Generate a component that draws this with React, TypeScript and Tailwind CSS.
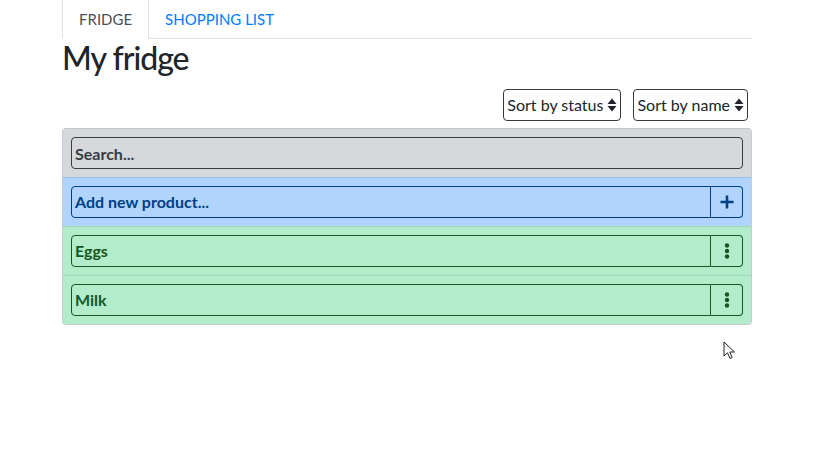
import { useState } from "react";

const font = { fontFamily: "Lato, 'Noto Sans', sans-serif" };

function SortCaret() {
  return (
    <svg width="10" height="14" viewBox="0 0 10 14" className="ml-[4px]">
      <path d="M5 0.5 L9.5 6 H0.5 Z" fill="#212529" />
      <path d="M5 13.5 L9.5 8 H0.5 Z" fill="#212529" />
    </svg>
  );
}

function SortSelect({ label }: { label: string }) {
  return (
    <button className="flex h-8 items-center rounded border border-[#343a40] bg-white px-[3px] text-base text-[#212529]">
      <span>{label}</span>
      <SortCaret />
    </button>
  );
}

function Dots() {
  return (
    <svg width="6" height="16" viewBox="0 0 6 16">
      <circle cx="3" cy="2.5" r="2.2" fill="#155724" />
      <circle cx="3" cy="8" r="2.2" fill="#155724" />
      <circle cx="3" cy="13.5" r="2.2" fill="#155724" />
    </svg>
  );
}

function Plus() {
  return (
    <svg width="14" height="14" viewBox="0 0 14 14">
      <path d="M7 0.5 V13.5 M0.5 7 H13.5" stroke="#004085" strokeWidth="2.6" />
    </svg>
  );
}

function ProductRow({ name }: { name: string }) {
  return (
    <div className="border-t border-[#9fd7b3] bg-[#b3ecca] p-2">
      <div className="flex h-8">
        <input
          readOnly
          value={name}
          className="min-w-0 flex-1 rounded-l border border-[#155724] bg-transparent px-[3px] font-bold text-[#155724] outline-none"
        />
        <button className="flex w-8 items-center justify-center rounded-r border border-l-0 border-[#155724]">
          <Dots />
        </button>
      </div>
    </div>
  );
}

export default function App() {
  const [tab, setTab] = useState("fridge");
  const products = ["Eggs", "Milk"];

  return (
    <div className="relative h-[450px] w-full bg-white text-[#212529]" style={font}>
      <div className="ml-[62px] w-[690px]">
        {/* Tabs */}
        <div className="flex border-b border-[#dee2e6]">
          <button
            onClick={() => setTab("fridge")}
            className="-mb-px h-[39px] border-x border-b border-[#dee2e6] border-b-white bg-white px-4 text-[15px] text-[#495057]"
          >
            FRIDGE
          </button>
          <button
            onClick={() => setTab("shopping")}
            className="h-[38px] px-4 text-[15px] text-[#007bff]"
          >
            SHOPPING LIST
          </button>
        </div>

        <h2 className="text-[32px] font-medium leading-[1.2] tracking-[-1px]">My fridge</h2>

        {/* Sort controls */}
        <div className="mt-[12px] flex justify-end gap-3 pr-1">
          <SortSelect label="Sort by status" />
          <SortSelect label="Sort by name" />
        </div>

        {/* Product list */}
        <div className="mt-[7px] overflow-hidden rounded border-x border-b border-[#c4cbd2]">
          <div className="border-t border-[#c4c6c9] bg-[#d6d8db] p-2">
            <input
              placeholder="Search..."
              className="h-8 w-full rounded border border-[#383d41] bg-transparent px-[3px] font-bold text-[#383d41] outline-none placeholder:text-[#383d41]"
            />
          </div>
          <div className="border-t border-[#9cc3ec] bg-[#b0d4fe] p-2">
            <div className="flex h-8">
              <input
                placeholder="Add new product..."
                className="min-w-0 flex-1 rounded-l border border-[#004085] bg-transparent px-[3px] font-bold text-[#004085] outline-none placeholder:text-[#004085]"
              />
              <button className="flex w-8 items-center justify-center rounded-r border border-l-0 border-[#004085]">
                <Plus />
              </button>
            </div>
          </div>
          {products.map((p) => (
            <ProductRow key={p} name={p} />
          ))}
        </div>
      </div>

      {/* mouse pointer */}
      <svg className="absolute left-[723px] top-[341px]" width="14" height="20" viewBox="0 0 14 20">
        <path d="M1 1 V15 L4.5 11.8 L7 17.5 L9.2 16.5 L6.8 11 H11.5 Z" fill="white" stroke="#222" strokeWidth="1" strokeLinejoin="round" />
      </svg>
    </div>
  );
}
